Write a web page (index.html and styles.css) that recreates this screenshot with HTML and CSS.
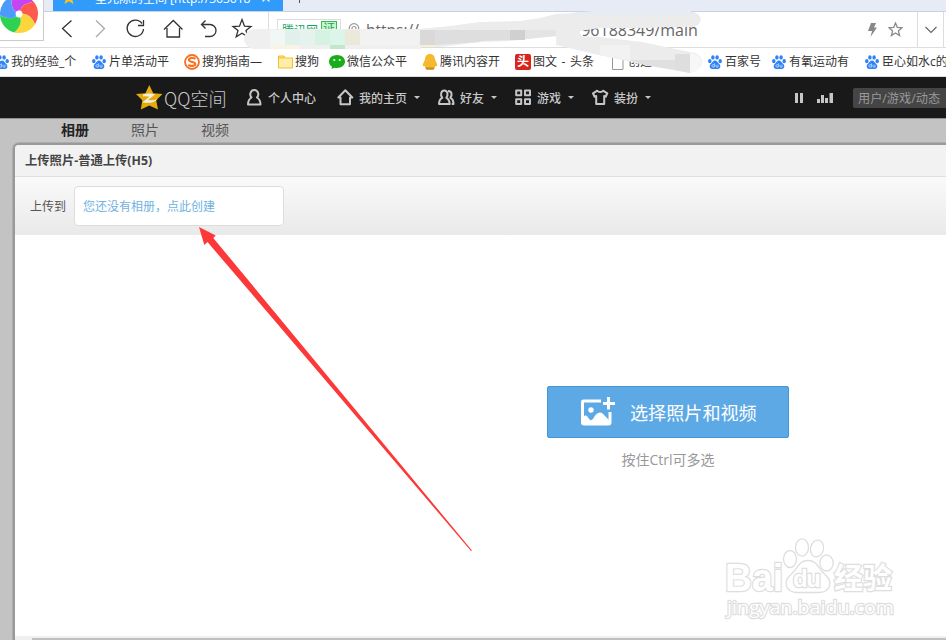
FILE: index.html
```
<!DOCTYPE html>
<html lang="zh-CN">

<head>
    <meta charset="UTF-8">
    <meta name="viewport" content="width=device-width, initial-scale=1.0">
    <title>QQ空间 - 上传照片</title>
    <link rel="stylesheet" href="styles.css">
</head>

<body>
    <svg class="symbols" width="0" height="0">
        <symbol id="paw" viewBox="0 0 14 14">
            <g fill="#2f82f5">
                <ellipse cx="1.8" cy="6.2" rx="1.7" ry="2.1" />
                <ellipse cx="4.9" cy="2.4" rx="1.7" ry="2.2" />
                <ellipse cx="9.1" cy="2.4" rx="1.7" ry="2.2" />
                <ellipse cx="12.2" cy="6.2" rx="1.7" ry="2.1" />
                <path d="M7 5.6C5 5.6 4.400 7.600 3 8.800 1 10.200 1.200 13.900 4.300 13.900H9.800C12.900 13.900 13 10.200 11 8.800 9.600 7.600 9 5.600 7 5.600Z" />
            </g>
            <path d="M6.400 8.400v3.700H5.100a1.200 1.200 0 010-2.400H6.400M8 9.700v1.600q0 .8.8.8H10V9.700" fill="none" stroke="#fff" stroke-width=".6" />
        </symbol>
    </svg>

    <div class="main-wrap">
        <!-- 浏览器 -->
        <div class="browser-wrap">
            <div class="browser-logo">
                <svg width="40" height="40" viewBox="-20 -20 40 40">
                    <path d="M-3-2Q-9-6-7-17.700A19 19 0 0 1 14.670-12.130Q2.930-10.410.980-3.470Z" fill="#c545f2" />
                    <path d="M-3-2Q-9-6-7-17.700A19 19 0 0 1 14.670-12.130Q2.930-10.410.980-3.470Z" fill="#ff5a4e" transform="rotate(72)" />
                    <path d="M-3-2Q-9-6-7-17.700A19 19 0 0 1 14.670-12.130Q2.930-10.410.980-3.470Z" fill="#fbd63a" transform="rotate(144)" />
                    <path d="M-3-2Q-9-6-7-17.700A19 19 0 0 1 14.670-12.130Q2.930-10.410.980-3.470Z" fill="#2fd152" transform="rotate(216)" />
                    <path d="M-3-2Q-9-6-7-17.700A19 19 0 0 1 14.670-12.130Q2.930-10.410.980-3.470Z" fill="#4a9bfa" transform="rotate(288)" />
                    <circle r="3.400" fill="#fff" />
                </svg>
            </div>
            <div class="tab-bar">
                <div class="tab">
                    <svg class="tab-star" width="14" height="14" viewBox="0 0 14 14">
                        <path d="M7 0l2 5 5 .3-4 3.400L11.500 14 7 11.300 2.500 14 4 8.700 0 5.300 5 5Z" fill="#fcc419" />
                    </svg>
                    <span class="tab-title">星光陈的空间 [http://363618</span>
                    <span class="tab-close">×</span>
                </div>
                <span class="tab-add"></span>
            </div>
            <div class="tool-bar">
                <svg class="tools" width="214" height="34" viewBox="44 13 214 34" fill="none" stroke="#333" stroke-width="1.3">
                    <path d="M71.500 21.500L62.500 29.500 71.500 38" />
                    <path d="M96 21.500L104.500 29.500 96 38" stroke="#aaa" />
                    <path d="M142 24.500A8.200 8.200 0 10143.500 30M143.500 21V26.500H138" />
                    <path d="M164 30.500L173.300 21.500 182.500 30.500M167 29V38H179.500V29" />
                    <path d="M205.500 21.500L201.500 25.500 205.500 29.500M202 25.500H210A6 6 0 01210 37.500H205" />
                    <path d="M242 20.500L244.500 27.200 251 27.500 246 31.500 247.800 37.800 242 34.300 236.200 37.800 238 31.500 233 27.500 239.500 27.200Z" />
                </svg>
                <div class="address">
                    <span class="site-tag">腾讯网<i>证</i></span>
                    <svg class="lock" width="12" height="14" viewBox="0 0 12 14" fill="none" stroke="#999" stroke-width="1.2">
                        <circle cx="6" cy="5.500" r="4.800" />
                        <circle cx="6" cy="5.500" r="2" />
                        <path d="M1 9V13H11V9" />
                    </svg>
                    <span class="url">https://</span>
                    <span class="url url-tail">.96188349/main</span>
                    <svg class="flash" width="9" height="14" viewBox="0 0 9 14" fill="#888">
                        <path d="M3 0H8L6 4.500H9L2.500 14 4 8H0Z" />
                    </svg>
                    <svg width="15" height="15" viewBox="0 0 15 15" fill="none" stroke="#888" stroke-width="1.300">
                        <path d="M7.500 1L9.300 5.500 14 5.800 10.400 8.900 11.600 13.500 7.500 11 3.400 13.500 4.600 8.900 1 5.800 5.700 5.500Z" />
                    </svg>
                </div>
                <div class="address-more">
                    <svg width="12" height="8" viewBox="0 0 12 8" fill="none" stroke="#666" stroke-width="1.200">
                        <path d="M.5 1L6 6.500 11.500 1" />
                    </svg>
                </div>
            </div>
            <nav class="bookmarks">
                <a class="wide"><svg width="14" height="14"><use href="#paw" /></svg>我的经验_个</a>
                <a><svg width="14" height="14"><use href="#paw" /></svg>片单活动平</a>
                <a class="wide"><svg width="16" height="16" viewBox="0 0 16 16" fill="none" stroke="#fb7020">
                        <circle cx="8" cy="8" r="7" stroke-width="1.800" />
                        <path d="M11.500 4.800C9.500 3.500 5 3.600 5 6S11.300 7.700 11.300 10 6.500 12.400 4.300 11" stroke-width="2.100" />
                    </svg>搜狗指南—</a>
                <a class="folder"><svg width="16" height="14" viewBox="0 0 16 14">
                        <path d="M.5 13V1H6L7.500 3H14.500V13Z" fill="#ffeeaa" stroke="#f5bd2c" />
                        <path d="M1 1.500H6L7 3.500H1Z" fill="#fbc93d" />
                    </svg>搜狗</a>
                <a class="wide"><svg width="16" height="14" viewBox="0 0 16 14">
                        <path d="M8 0C3.500 0 0 2.800 0 6.500 0 8.700 1.200 10.500 3 11.700L2.500 14 5.300 12.700C11 13.800 16 11 16 6.500 16 2.800 12.500 0 8 0Z" fill="#19ad19" />
                        <circle cx="5.300" cy="5" r="1.100" fill="#fff" />
                        <circle cx="10.700" cy="5" r="1.100" fill="#fff" />
                    </svg>微信公众平</a>
                <a class="wide"><svg width="16" height="16" viewBox="0 0 16 16">
                        <path d="M8 0C4.500 0 3 2.500 3 5.500 2 8 .5 10 .8 12.300L2.500 12 4 14H12L13.500 12 15.200 12.300C15.500 10 14 8 13 5.500 13 2.500 11.500 0 8 0Z" fill="#f4b92c" />
                        <path d="M3 13.500H13L11.500 15.700H4.500Z" fill="#c98d1d" />
                    </svg>腾讯内容开</a>
                <a class="wide"><i class="toutiao">头</i><span class="toutiao-text">图文 - 头条</span></a>
                <a class="page"><svg width="12" height="15" viewBox="0 0 12 15" fill="#fff" stroke="#999">
                        <path d="M.5.5H7.500L11 4V14.500H.5Z" />
                    </svg>创建</a>
                <a><svg width="14" height="14"><use href="#paw" /></svg>百家号</a>
                <a><svg width="14" height="14"><use href="#paw" /></svg>有氧运动有</a>
                <a><svg width="14" height="14"><use href="#paw" /></svg>臣心如水c的</a>
            </nav>
        </div>

        <!-- QQ空间导航 -->
        <header class="header-wrap">
            <a class="qz-logo">
                <svg width="27" height="26" viewBox="0 0 27 26">
                    <path d="M13.300 0L17.200 8.200 26.500 9 20.200 15.300 22 24.500 13.300 20.600 4.800 24.500 6.300 15.300 0 9 9.400 8.200Z" fill="#e3ab0c" />
                    <path d="M7 9.500C11 8.300 15 8.300 19 9.500L12 15C15 15.600 18 15.500 21.500 14 18.500 18 12 18.500 6.500 17.300L13.500 11.700C11 11 9 11 7 11.500Z" fill="#f2efe0" />
                </svg>
                QQ空间
            </a>
            <a class="nav-item first">
                <svg width="15" height="17" viewBox="0 0 15 17">
                    <path d="M4.500 8.500C2 6 3.500 1 7.300 1S12.500 6 10 8.500C12.500 10 13.500 12.500 13.500 15.500H1C1 12.500 2 10 4.500 8.500Z" />
                </svg>
                个人中心
            </a>
            <a class="nav-item">
                <svg width="17" height="17" viewBox="0 0 17 17">
                    <path d="M3.500 8.500H1.300L8.300 1.300 15.300 8.500H13V15.200H3.500Z" />
                </svg>
                我的主页<i class="caret"></i>
            </a>
            <a class="nav-item">
                <svg width="17" height="17" viewBox="0 0 17 17">
                    <path d="M4.300 8.800C2 6 3 1.500 6.300 1.500S10.600 6 8.300 8.800C11 10 11.500 12 11.700 15H1C1 12 1.700 10 4.300 8.800ZM10 2C14 2 14.500 6 12.300 8.800 15 10 15.500 12 15.500 15H13.700" />
                </svg>
                好友<i class="caret"></i>
            </a>
            <a class="nav-item">
                <svg width="17" height="17" viewBox="0 0 17 17">
                    <path d="M1.200 1.500H6.200V6.300H1.200ZM10 1.500H15V6.300H10ZM1.200 10.200H6.200V15H1.200ZM10 10.200H15V15H10Z" />
                </svg>
                游戏<i class="caret"></i>
            </a>
            <a class="nav-item">
                <svg width="17" height="17" viewBox="0 0 17 17">
                    <path d="M5.300 1.700C6.500 3.500 9.800 3.500 11 1.700L15.300 4.300 13.700 7.700 12.200 7V15H4.200V7L2.600 7.700 1 4.300Z" />
                </svg>
                装扮<i class="caret"></i>
            </a>
            <div class="header-right">
                <svg width="39" height="12" viewBox="0 0 39 12" fill="#c6c6c6">
                    <path d="M0 1H3V11H0ZM5 1H8V11H5ZM22 7H25V11H22ZM26 3H29V11H26ZM30 6H33V11H30ZM34.500 1H38V11H34.500Z" />
                </svg>
                <div class="search">用户/游戏/动态</div>
            </div>
        </header>

        <section class="body-wrap">
            <div class="sub-nav">
                <a class="active">相册</a>
                <a>照片</a>
                <a>视频</a>
            </div>
            <div class="dialog">
                <h3 class="dialog-title">上传照片-普通上传(H5)</h3>
                <div class="album-bar">
                    <span>上传到</span>
                    <a class="album-select">您还没有相册，点此创建</a>
                </div>
                <div class="upload-wrap">
                    <div class="upload-btn">
                        <svg width="36" height="30" viewBox="0 0 36 30">
                            <path d="M21 4H3.500Q2.500 4 2.500 5V25.500Q2.500 27 4 27H28.500Q30 27 30 25.500V15" fill="none" stroke="#fff" stroke-width="3" />
                            <path d="M2 22C4 18 6 17.500 8 20.500L10 23C11 23.500 12 23 13 22 17 14.500 21 14 24.500 18.500L30 24V27H3Z" fill="#fff" />
                            <circle cx="11" cy="13" r="2.700" fill="#fff" />
                            <path d="M27 0H30V5H35V8H30V12.500H27V8H23V5H27Z" fill="#fff" />
                        </svg>
                        选择照片和视频
                    </div>
                    <p class="upload-tip">按住Ctrl可多选</p>
                </div>
                <div class="scroll-bar"></div>
            </div>
        </section>
    </div>

    <!-- 涂抹 -->
    <svg class="smear" width="470" height="66" viewBox="240 10 470 66">
        <path d="M256 29H421V49H256C240 49 240 29 256 29Z" fill="#efefef" />
        <path d="M270 30H285V45H270Z" fill="#f1f7f4" />
        <path d="M285 30H300V45H285Z" fill="#e0f1eb" />
        <path d="M300 30H315V45H300Z" fill="#e6f2ed" />
        <path d="M315 30H330V45H315Z" fill="#d5f2e2" />
        <path d="M330 30H345V45H330Z" fill="#dbf5e8" />
        <path d="M345 30H360V45H345Z" fill="#ece8da" />
        <path d="M360 30H420V45H360Z" fill="#f2f2f3" />
        <path d="M270 45H300V49H270Z" fill="#f8f3e3" />
        <path d="M330 45H345V49H330Z" fill="#c5e7c9" />
        <path d="M420 29L450 26 480 22 520 21 540 18 556 14 593 12H694C703 15 703 24 694 27H660L650 28H600L580 31V36L600 37 642 42 680 50 695 53C706 58 704 69 690 73L650 66 590 53 556 45V36L510 41 480 42 440 47H420Z" fill="#ececed" />
        <path d="M420 30H435V45H420Z" fill="#dad8d9" />
        <path d="M435 30H480V42L435 45Z" fill="#dfdede" />
        <path d="M480 30H510V40L480 41Z" fill="#dedede" />
        <path d="M510 30H525V40H510Z" fill="#d0d0d2" />
        <path d="M525 30H556V36L525 39Z" fill="#e4e4e4" />
        <path d="M570 13L593 11H690L697 15H570Z" fill="#e7ebf4" />
        <path d="M420 45H435V47H420Z" fill="#f9efd4" />
        <path d="M600 45L630 45V60L600 55Z" fill="#f2f2f2" />
        <path d="M630 60H675V70L645 65Z" fill="#e0e0e0" />
        <path d="M675 54H690V73L675 70Z" fill="#dedede" />
        <path d="M690 53C706 55 704 70 690 73Z" fill="#f7f7f7" />
    </svg>

    <!-- 箭头 -->
    <svg class="arrow" width="276" height="328" viewBox="198 226 276 328">
        <path d="M199 227L215.700 235.500 213.300 238 472 550.500 471 551 207.500 242 204.300 245Z" fill="#fc3838" />
    </svg>

    <svg class="watermark" width="180" height="92" viewBox="720 535 180 92">
        <g fill="#fff" stroke="#dedede" stroke-width="1.300">
            <text class="wm-bai" x="725" y="591" textLength="58" lengthAdjust="spacingAndGlyphs">Bai</text>
            <ellipse cx="790" cy="559" rx="6.500" ry="8.500" />
            <ellipse cx="802" cy="547.500" rx="6.500" ry="8.700" />
            <ellipse cx="817" cy="548.500" rx="6.500" ry="8.500" transform="rotate(12 817 548.500)" />
            <ellipse cx="826.500" cy="563" rx="6.700" ry="8" />
            <path d="M808 560.500C798 560.500 798 569 791 574.500 783 581 785 592.500 797 592.500H819C831 592.500 833 581 825 574.500 818 569 818 560.500 808 560.500Z" />
            <text class="wm-du" x="793" y="587" textLength="28">du</text>
            <text class="wm-cn" x="834" y="589" textLength="58">经验</text>
            <text class="wm-url" x="727" y="614" textLength="167" lengthAdjust="spacingAndGlyphs">jingyan.baidu.com</text>
        </g>
    </svg>
</body>

</html>
```
FILE: styles.css
```
html,
body {
    padding: 0;
    margin: 0;

    height: 100%;
    width: 100%;
    overflow: hidden;
}

body {
    position: relative;
    font-family: "Open Sans", "Noto Sans CJK SC", sans-serif;
    font-size: 12px;
    color: #333;
}

i {
    font-style: normal;
}

svg {
    flex: none;
}

.symbols {
    position: absolute;
}

.main-wrap {
    display: flex;
    flex-direction: column;
    height: 100%;
}

/* 浏览器 */
.browser-wrap {
    flex: none;
    display: grid;
    grid-template-rows: 12px 36px 29px;
    background-color: #fff;
}

.browser-logo {
    position: absolute;
    left: 0;
    top: 0;

    width: 43px;
    height: 40px;
    overflow: hidden;
    border-right: 1px solid #ccc;
    border-bottom: 1px solid #ccc;
    background-color: #fff;
}

.browser-logo svg {
    display: block;
    margin: -6px 0 0 -1px;
}

.tab-bar {
    display: flex;
    box-sizing: border-box;
    padding-left: 53px;
    overflow: hidden;
    border-bottom: 1px solid #cbd1dd;
    background-color: #e7ebf5;
}

.tab {
    display: flex;
    align-items: flex-start;
    width: 230px;
    height: 12px;
    background-color: #319bfc;
    color: #fff;
}

.tab-star {
    margin: -10px 0 0 9px;
}

.tab-title {
    width: 158px;
    margin: -11px 0 0 19px;
    line-height: 20px;
    font-size: 12px;
    white-space: nowrap;
    overflow: hidden;
}

.tab-close {
    margin: -12px 0 0 8px;
    line-height: 20px;
    font-size: 17px;
}

.tab-add {
    width: 1px;
    height: 3px;
    margin-left: 16px;
    background-color: #555;
}

.tool-bar {
    display: flex;
    box-sizing: border-box;
    border-bottom: 1px solid #ddd;
}

.tools {
    margin-left: 44px;
}

.address {
    display: flex;
    align-items: center;
    width: 648px;
    margin-left: 10px;
    border-left: 1px solid #ddd;
    border-right: 1px solid #ddd;
}

.site-tag {
    display: flex;
    align-items: center;
    box-sizing: border-box;
    width: 64px;
    height: 22px;
    margin-left: 8px;
    padding-left: 4px;
    border: 1px solid #ddd;
    color: #15a660;
}

.site-tag i {
    width: 14px;
    height: 15px;
    margin-left: 3px;
    border: 1px solid #3cba54;
    background-color: #c5f5ca;
    line-height: 14px;
    text-align: center;
}

.lock {
    margin-left: 7px;
}

.url {
    margin-left: 6px;
    width: 60px;
    font-size: 15.5px;
    line-height: 18px;
    color: #666;
    white-space: nowrap;
}

.url-tail {
    width: 120px;
    margin-left: 151px;
    font-size: 16px;
}

.flash {
    margin: 0 11px 0 171px;
}

.address-more {
    display: flex;
    align-items: center;
    justify-content: center;
    width: 25px;
    border-right: 1px solid #ddd;
}

.bookmarks {
    display: grid;
    grid-template-columns: 97px 92px 94px 51px 93px 93px 97px 96px 64px 93px 100px;
    box-sizing: border-box;
    margin-left: -5px;
    border-bottom: 1px solid #ddd;
}

.bookmarks a {
    display: flex;
    align-items: center;
    gap: 3px;
    white-space: nowrap;
    line-height: 18px;
}

.bookmarks .wide {
    gap: 2px;
}

.bookmarks .folder {
    gap: 1px;
}

.bookmarks .page {
    gap: 4px;
}

.toutiao {
    width: 16px;
    height: 16px;
    border-radius: 2px;
    background-color: #d9251d;
    color: #fff;
    line-height: 16px;
    font-weight: bold;
    text-align: center;
}

.toutiao-text {
    word-spacing: 1.5px;
}

/* 导航 */
.header-wrap {
    flex: none;
    display: grid;
    grid-template-columns: 111px 90px 101px 77px 77px 203px 1fr;
    box-sizing: border-box;
    height: 41px;
    padding-left: 136px;
    background-color: #191919;
    color: #c8c8c8;
}

.qz-logo,
.nav-item,
.header-right {
    display: flex;
    align-items: center;
    white-space: nowrap;
}

.qz-logo {
    gap: 1px;
    font-family: "Noto Sans CJK SC", sans-serif;
    font-size: 18.2px;
    font-weight: 300;
}

.nav-item {
    gap: 6px;
    font-weight: 500;
}

.nav-item svg {
    margin-right: -1px;
    fill: none;
    stroke: #c6c6c6;
    stroke-width: 2;
    stroke-linejoin: round;
}

.first svg {
    margin-right: 0;
}

.caret {
    margin-left: 1px;
    border: 3px solid transparent;
    border-top-color: #c6c6c6;
    border-bottom: 0;
}

.header-right {
    overflow: hidden;
}

.search {
    flex: 1 0 100px;
    height: 20px;
    margin-left: 19px;
    padding-left: 5px;
    border-radius: 2px;
    background-color: #454545;
    color: #999;
    font-size: 12.2px;
    line-height: 21px;
}

/* 内容 */
.body-wrap {
    flex: 1;
    display: flex;
    flex-direction: column;
    background-color: #c3c3c3;
}

.sub-nav {
    display: flex;
    gap: 42px;
    box-sizing: border-box;
    height: 27px;
    padding-left: 61px;
    border-top: 1px solid #8f8f8f;
    font-size: 14px;
    line-height: 22px;
    color: #555;
}

.sub-nav .active {
    font-weight: bold;
    color: #222;
}

.dialog {
    flex: 1;
    display: flex;
    flex-direction: column;
    margin-left: 15px;
    border-top-left-radius: 4px;
    background-color: #fff;
    box-shadow: 0 0 0 2px #999, 0 0 0 3px #adadad;
}

.dialog-title {
    box-sizing: border-box;
    height: 32px;
    margin: 0;
    padding-left: 10px;
    border-bottom: 1px solid #e0e0e0;
    border-top-left-radius: 4px;
    background-color: #f2f2f2;
    font-size: 12.3px;
    line-height: 31px;
    color: #444;
}

.album-bar {
    display: flex;
    align-items: center;
    gap: 8px;
    height: 58px;
    padding-left: 15px;
    background: linear-gradient(#fafafa, #e9e9e9);
    color: #555;
}

.album-select {
    box-sizing: border-box;
    width: 210px;
    height: 40px;
    padding-left: 8px;
    border: 1px solid #ddd;
    border-radius: 4px;
    background-color: #fff;
    line-height: 40px;
    color: #71b2df;
}

.upload-wrap {
    flex: 1;
    padding: 151px 0 0 532px;
}

.upload-btn {
    display: flex;
    align-items: center;
    gap: 14px;
    box-sizing: border-box;
    width: 242px;
    height: 52px;
    padding-left: 32px;
    border: 1px solid #4495d8;
    border-radius: 2px;
    background-color: #5da9e6;
    font-size: 18.1px;
    color: #fff;
}

.upload-tip {
    width: 242px;
    margin: 12px 0 0;
    font-size: 14px;
    line-height: 20px;
    text-align: center;
    color: #999;
}

.scroll-bar {
    height: 2px;
    padding: 2px 0 0 17px;
    background: #c0c0c0 content-box;
    box-shadow: inset 0 2px #f0f0f0, inset 17px 0 #f0f0f0;
}

.smear {
    position: absolute;
    left: 240px;
    top: 10px;
}

.arrow {
    position: absolute;
    left: 198px;
    top: 226px;
}

.watermark {
    position: absolute;
    left: 720px;
    top: 535px;
}

.watermark text {
    paint-order: stroke;
    stroke-width: 2.4;
}

.wm-bai {
    font: bold 38px "Liberation Sans", sans-serif;
}

.wm-du {
    font: bold 24px "Liberation Sans", sans-serif;
}

.wm-cn {
    font: bold 29px "Noto Sans CJK SC", sans-serif;
}

.wm-url {
    font: 19px "Open Sans", sans-serif;
}
```
